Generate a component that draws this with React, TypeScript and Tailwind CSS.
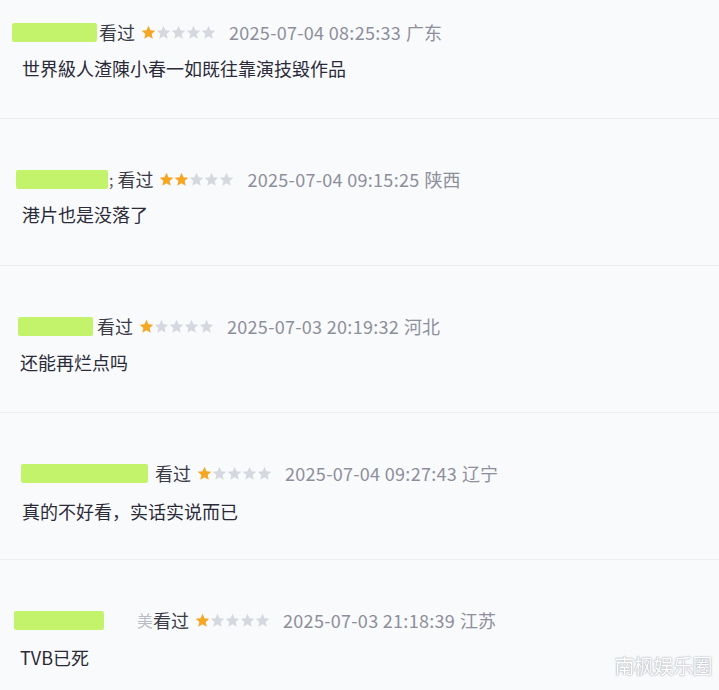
import React from 'react';

type Review = {
  barLeft: string;
  barWidth: string;
  extra?: React.ReactNode;
  seenMargin: string;
  stars: number;
  time: string;
  region: string;
  text: string;
  textLeft: string;
  top: string;
  gap: string;
  bottom: string;
};

const font = { fontFamily: '"Noto Sans CJK SC", "Noto Sans", sans-serif' };

function Star({ on }: { on: boolean }) {
  return (
    <svg width="15" height="15" viewBox="1 1 22 22" className="shrink-0">
      <path
        d="M12 2.2l2.9 6.6 7.1.6-5.4 4.7 1.6 7-6.2-3.7-6.2 3.7 1.6-7L2 9.4l7.1-.6z"
        fill={on ? '#f5a623' : '#d5d9df'}
      />
    </svg>
  );
}

const reviews: Review[] = [
  {
    barLeft: 'pl-[12px]',
    barWidth: 'w-[85px]',
    seenMargin: 'ml-[2px]',
    stars: 1,
    time: '2025-07-04 08:25:33',
    region: '广东',
    text: '世界級人渣陳小春一如既往靠演技毀作品',
    textLeft: 'pl-[22px]',
    top: 'pt-[20px]',
    gap: 'mt-[12px]',
    bottom: 'pb-[38px]',
  },
  {
    barLeft: 'pl-[16px]',
    barWidth: 'w-[92px]',
    extra: <span className="ml-[1px] mr-[4px] text-[#555]">;</span>,
    seenMargin: 'ml-[0px]',
    stars: 2,
    time: '2025-07-04 09:15:25',
    region: '陕西',
    text: '港片也是没落了',
    textLeft: 'pl-[22px]',
    top: 'pt-[48px]',
    gap: 'mt-[11px]',
    bottom: 'pb-[39px]',
  },
  {
    barLeft: 'pl-[18px]',
    barWidth: 'w-[75px]',
    seenMargin: 'ml-[4px]',
    stars: 1,
    time: '2025-07-03 20:19:32',
    region: '河北',
    text: '还能再烂点吗',
    textLeft: 'pl-[20px]',
    top: 'pt-[48px]',
    gap: 'mt-[12px]',
    bottom: 'pb-[38px]',
  },
  {
    barLeft: 'pl-[21px]',
    barWidth: 'w-[127px]',
    seenMargin: 'ml-[7px]',
    stars: 1,
    time: '2025-07-04 09:27:43',
    region: '辽宁',
    text: '真的不好看，实话实说而已',
    textLeft: 'pl-[22px]',
    top: 'pt-[48px]',
    gap: 'mt-[14px]',
    bottom: 'pb-[36px]',
  },
  {
    barLeft: 'pl-[14px]',
    barWidth: 'w-[90px]',
    extra: <span className="ml-[33px] text-[#b9bcc4] blur-[0.6px]">美</span>,
    seenMargin: 'ml-[0px]',
    stars: 1,
    time: '2025-07-03 21:18:39',
    region: '江苏',
    text: 'TVB已死',
    textLeft: 'pl-[20px]',
    top: 'pt-[48px]',
    gap: 'mt-[13px]',
    bottom: 'pb-[40px]',
  },
];

export default function App() {
  return (
    <div className="relative w-[719px] h-[690px] overflow-hidden bg-[#f9fafc]" style={font}>
      {reviews.map((r, i) => (
        <div
          key={i}
          className={`${r.top} ${r.bottom} ${i < reviews.length - 1 ? 'border-b border-[#eceef3]' : ''}`}
        >
          <div className={`flex items-center h-[24px] ${r.barLeft}`}>
            <div className={`h-[19px] ${r.barWidth} bg-[#c3f26b] rounded-[2px] shrink-0`} />
            {r.extra}
            <span className={`${r.seenMargin} text-[18px] text-[#3b3b46] whitespace-nowrap`}>看过</span>
            <div className="flex items-center ml-[6px]">
              {[0, 1, 2, 3, 4].map(s => (
                <Star key={s} on={s < r.stars} />
              ))}
            </div>
            <span className="ml-[13px] text-[18px] text-[#8d8f9b] whitespace-nowrap tracking-[0.3px]">
              {r.time}
            </span>
            <span className="ml-[5px] text-[18px] text-[#8d8f9b] whitespace-nowrap">{r.region}</span>
          </div>
          <div className={`${r.gap} h-[24px] flex items-center ${r.textLeft} text-[18px] text-[#2b2a38] whitespace-nowrap`}>
            {r.text}
          </div>
        </div>
      ))}
      <div
        className="absolute right-[7px] bottom-[9px] text-[20px] text-white tracking-[-0.5px]"
        style={{ textShadow: '0 0 1px #9aa0a8, 0 0 2px #b0b5bc' }}
      >
        南枫娱乐圈
      </div>
    </div>
  );
}
